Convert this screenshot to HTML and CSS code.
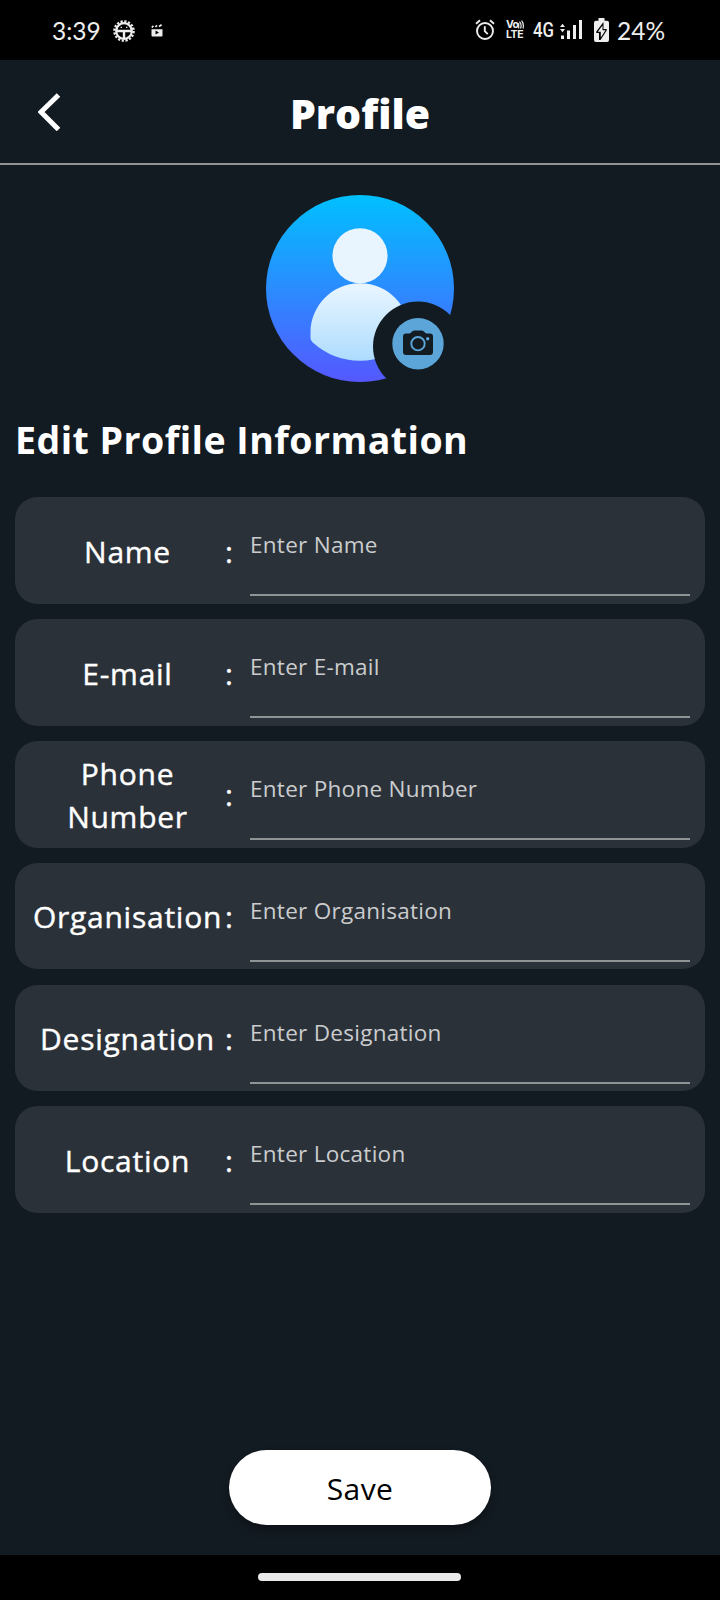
FILE: index.html
```html
<!DOCTYPE html>
<html lang="en">
<head>
<meta charset="utf-8">
<title>Profile</title>
<link rel="stylesheet" href="styles.css">
</head>
<body>
<div class="screen">
  <div class="status">
    <span class="clock">3:39</span>
    <svg class="gear" width="22" height="22" viewBox="0 0 22 22" fill="none" stroke="#eee"><circle cx="11" cy="11" r="9.600" stroke-width="2.400" stroke-dasharray="2.200 1.570"/><circle cx="11" cy="11" r="7.800" stroke-width="2.200"/><path d="M3.500 11h15M11 11v8" stroke-width="2.400"/><path d="M7.600 7.400h1.400M13 7.400h1.400" stroke-width="1.300"/></svg>
    <svg class="clapper" width="12" height="13" viewBox="0 0 12 13"><path d="M.5 5.200h11v6.300a1 1 0 0 1-1 1h-9a1 1 0 0 1-1-1z" fill="#eee"/><path d="M4.500 6.600v4L8 8.600z" fill="#000"/><path d="M.8 3.500l1.600-1.600M4.400 3l1.600-1.600M8 2.500L10.600.8" stroke="#eee" stroke-width="1.700"/></svg>
    <span class="space"></span>
    <svg class="alarm" width="20" height="22" viewBox="0 0 20 22" fill="none" stroke="#eee" stroke-width="1.900"><circle cx="10" cy="12" r="8"/><path d="M9.800 7.200v5l3 3M1 4.700L5 1.200M19 4.700L15 1.200"/></svg>
    <span class="volte"><span class="vo">Vo<svg width="6" height="9" viewBox="0 0 6 9" fill="none" stroke="#eee" stroke-width="1.200"><path d="M.7 3v5.500M1.500 1.600Q4 4 2.600 8.500M3.600.7Q6.200 4 5 8.500"/></svg></span><span class="lte">LTE</span></span>
    <span class="net">4G</span>
    <svg class="bars" width="23" height="20" viewBox="0 0 23 20" fill="#eee"><path d="M0 7l2.500-3.300L5 7zM0 9h5l-2.500 3.300zM1 15.500h3V19H1zM7 10.500h3V19H7zM13 5h3v14h-3zM19 0h3v19h-3z"/></svg>
    <svg class="battery" width="15" height="24" viewBox="0 0 15 24"><path d="M4.500 0h6v2.700h2.500a2 2 0 0 1 2 2V22a2 2 0 0 1-2 2H2a2 2 0 0 1-2-2V4.700a2 2 0 0 1 2-2h2.500z" fill="#eee"/><path d="M9.500 4L2.300 13.500v1.500h2.700L5 22h1.500l6.200-9.500V11H9.500z" fill="#000"/><path d="M8.500 7.500L3.800 13.700h3V19.500l4.700-7.300h-3z" fill="#eee"/></svg>
    <span class="percent">24%</span>
  </div>
  <header class="header">
    <svg class="back" width="24" height="38" viewBox="0 0 24 38"><path d="M20.500 2L3 19l17.500 17.500" fill="none" stroke="#fff" stroke-width="5"/></svg>
    <h1 class="title">Profile</h1>
  </header>
  <main class="main">
    <svg class="avatar" width="188" height="188" viewBox="0 0 188 188">
      <defs>
        <linearGradient id="sky" x1="0" y1="0" x2="0" y2="1"><stop offset="0" stop-color="#00c0ff"/><stop offset="1" stop-color="#5558ff"/></linearGradient>
        <linearGradient id="body" x1="0" y1="0" x2="0" y2="1"><stop offset="0" stop-color="#eaf6ff"/><stop offset="1" stop-color="#addcff"/></linearGradient>
      </defs>
      <ellipse cx="94" cy="93.500" rx="94" ry="93.500" fill="url(#sky)"/>
      <circle cx="94" cy="60.800" r="27.600" fill="#e8f5ff"/>
      <path d="M94 88.300C66 88.300 44.500 111 44.500 138V143Q44.500 145.500 46.500 147.200 67 165.700 94 165.700T141.500 147.200Q143.500 145.500 143.500 143V138C143.500 111 122 88.300 94 88.300z" fill="url(#body)"/>
      <circle class="notch" cx="152" cy="151.500" r="45"/>
      <circle cx="152" cy="148.700" r="25.700" fill="#5ba5d8"/>
      <path d="M140 138.500h3.500q1.200-.2 2-1.500 1-1.500 3-1.500h7q2 0 3 1.500.8 1.300 2 1.500h3.500a3 3 0 0 1 3 3V157a3 3 0 0 1-3 3h-24a3 3 0 0 1-3-3v-15.500a3 3 0 0 1 3-3z" fill="#131c23"/>
      <circle cx="152" cy="148.700" r="6.700" fill="none" stroke="#5ba5d8" stroke-width="1.900"/>
      <circle cx="161.700" cy="143.700" r="1.700" fill="#5ba5d8"/>
    </svg>
    <h2 class="heading">Edit Profile Information</h2>
    <div class="fields">
      <label class="card"><span class="label">Name</span><span class="colon">:</span><input class="input" placeholder="Enter Name"></label>
      <label class="card"><span class="label">E-mail</span><span class="colon">:</span><input class="input" placeholder="Enter E-mail"></label>
      <label class="card"><span class="label">Phone Number</span><span class="colon">:</span><input class="input" placeholder="Enter Phone Number"></label>
      <label class="card"><span class="label">Organisation</span><span class="colon">:</span><input class="input" placeholder="Enter Organisation"></label>
      <label class="card"><span class="label">Designation</span><span class="colon">:</span><input class="input" placeholder="Enter Designation"></label>
      <label class="card"><span class="label">Location</span><span class="colon">:</span><input class="input" placeholder="Enter Location"></label>
    </div>
    <button class="save">Save</button>
  </main>
  <div class="navbar"><div class="handle"></div></div>
</div>
</body>
</html>
```
FILE: styles.css
```css
* { box-sizing: border-box; }
body { margin: 0; background: #000; }
.screen {
  width: 720px; height: 1600px; display: flex; flex-direction: column;
  background: #131b22; color: #fff; font-family: "Open Sans", "Noto Sans", sans-serif;
}
.status {
  height: 60px; flex: none; background: #000; color: #eee;
  display: flex; align-items: center; padding: 0 54px 0 52px;
  font-family: Lato, sans-serif; font-size: 24.500px;
}
.status svg { flex: none; display: block; }
.clock { width: 61px; padding-top: 1px; }
.gear { margin-top: 1px; }
.clapper { margin: 1px 0 0 16px; }
.space { flex: 1; }
.alarm { margin-right: 11px; margin-bottom: 1px; }
.volte { display: flex; flex-direction: column; width: 18px; font: 700 10.500px/10px Inter, sans-serif; margin-right: 9px; }
.vo { display: flex; letter-spacing: -0.6px; }
.lte { letter-spacing: -0.4px; }
.net { width: 27px; font: 500 20px Roboto, sans-serif; transform: scaleX(0.84); transform-origin: left; }
.bars { margin-right: 11px; margin-bottom: 1px; }
.battery { margin-right: 8px; }
.percent { width: 49px; padding-top: 1px; }
.header {
  height: 105px; flex: none; border-bottom: 2px solid #8f9396;
  display: grid; grid-template-columns: 62px 1fr 62px; align-items: center;
}
.back { display: block; margin: 1px 0 0 37.500px; }
.title { margin: 2px 0 0; text-align: center; font-size: 41px; line-height: 56px; font-weight: 800; }
.main { flex: 1; display: flex; flex-direction: column; padding: 30px 15px 0; }
.avatar { display: block; align-self: center; }
.notch { fill: #131b22; }
.heading { margin: 30px 0 0; font-size: 37.500px; line-height: 54px; font-weight: 700; letter-spacing: 0.460px; }
.fields { display: flex; flex-direction: column; gap: 15.170px; margin-top: 30.150px; }
.card {
  height: 106.700px; border-radius: 22.500px; background: #2b3138; padding: 0 15px;
  display: grid; grid-template-columns: 195px 25px 1fr; align-items: center;
}
.label, .colon { font-size: 30px; line-height: 43px; padding-top: 1.400px; -webkit-text-stroke: 0.400px #fff; }
.label { text-align: center; letter-spacing: 0.750px; }
.input {
  align-self: end; width: 100%; height: 90px; margin: 0 0 7.600px; padding: 0 0 11px;
  border: 0; border-bottom: 2px solid #8f9396; border-radius: 0; outline: 0; background: none;
  color: #fff; font: 400 22.500px/32px "Open Sans", "Noto Sans", sans-serif; letter-spacing: 0.280px;
}
.input::placeholder { color: #caccce; opacity: 1; }
.save {
  align-self: center; width: 262.500px; height: 75px; margin: auto 0 30px; padding: 1px 0 0;
  border: 0; border-radius: 38px; background: #fff; color: #000;
  font: 400 30px "Open Sans", "Noto Sans", sans-serif; letter-spacing: 0.400px;
  box-shadow: 0 5px 9px rgba(0, 0, 0, 0.350);
}
.navbar { height: 45px; flex: none; background: #000; display: flex; justify-content: center; }
.handle { width: 203px; height: 8px; margin: 18px 1px 0 0; border-radius: 4px; background: #e9e9e9; }
```
